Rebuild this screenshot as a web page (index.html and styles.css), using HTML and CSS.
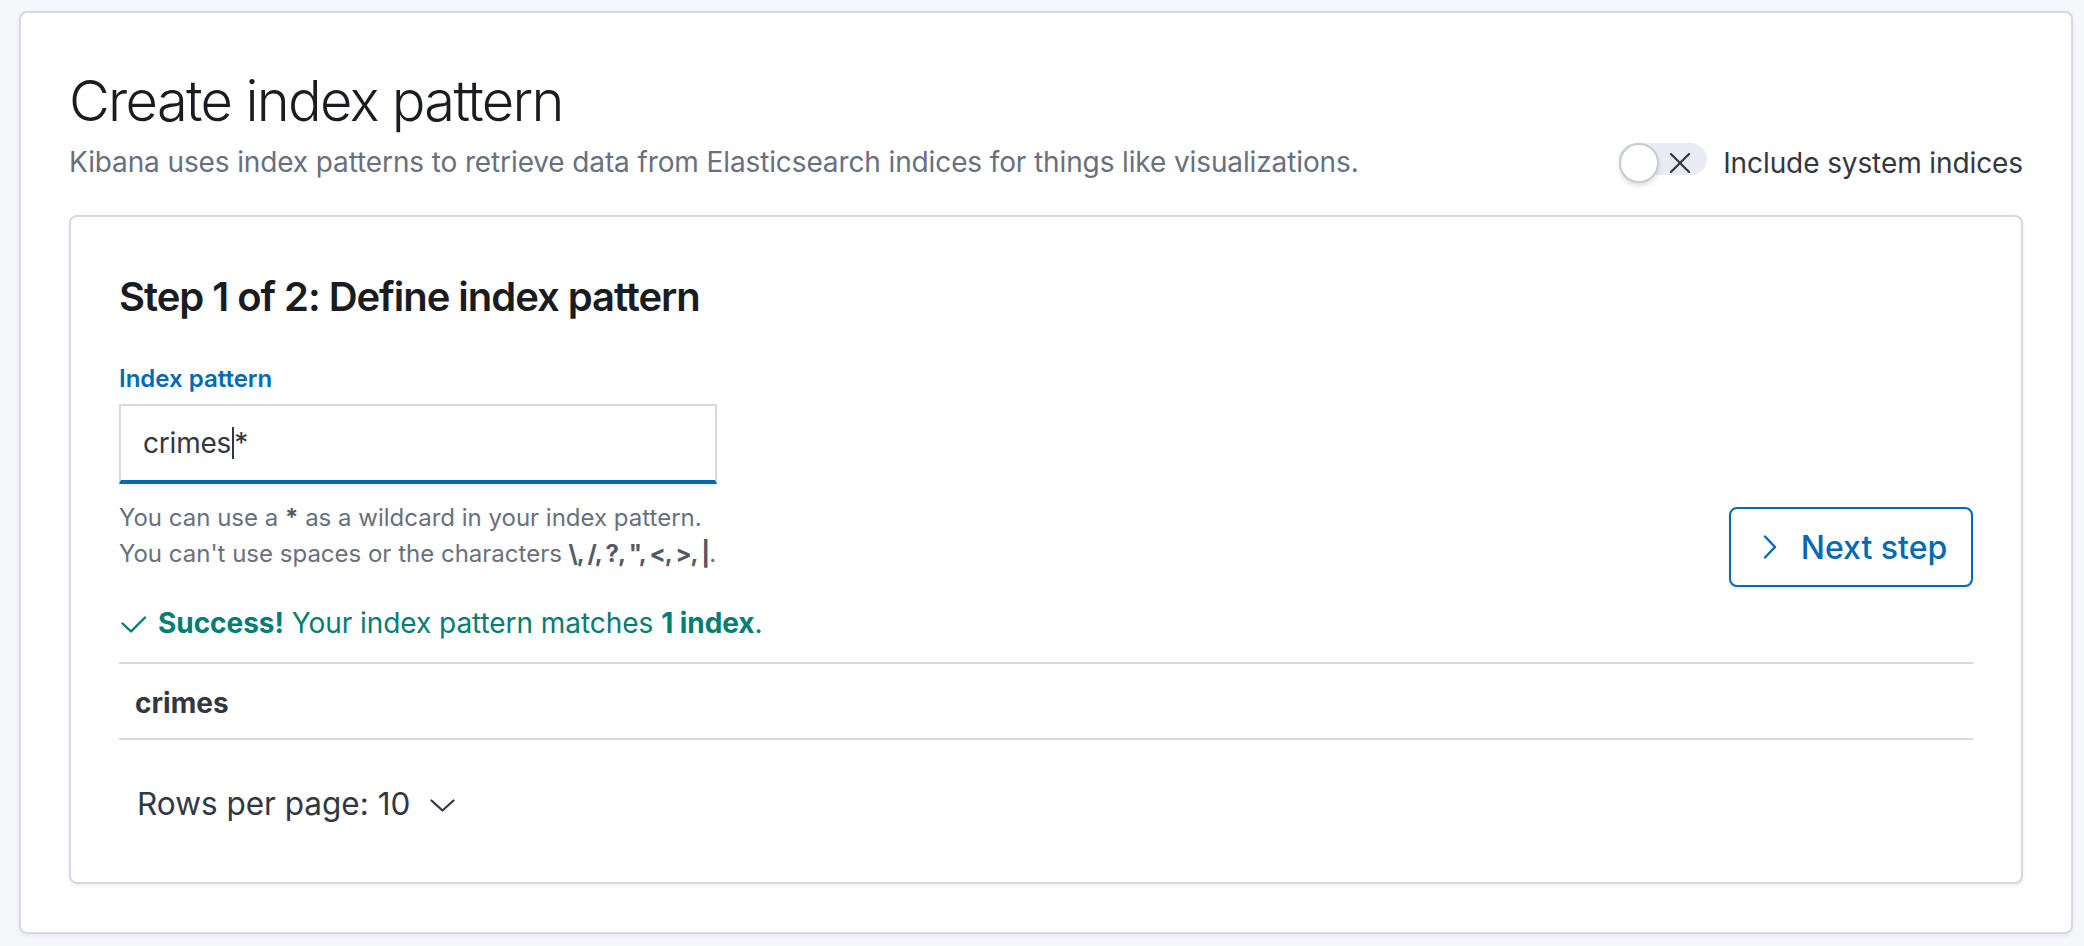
FILE: index.html
```html
<!DOCTYPE html>
<html lang="en">
<head>
<meta charset="utf-8">
<title>Create index pattern</title>
<link rel="stylesheet" href="styles.css">
</head>
<body>
<div class="page">
  <div class="panel">
    <div class="header">
      <div class="header-text">
        <h1 class="title">Create index pattern</h1>
        <p class="subtitle">Kibana uses index patterns to retrieve data from Elasticsearch indices for things like visualizations.</p>
      </div>
      <div class="switch">
        <div class="switch-track">
          <span class="switch-knob"></span>
          <svg class="switch-x" width="22" height="20" viewBox="0 0 22 20"><path d="M2 1 L20 19 M20 1 L2 19" stroke="#343741" stroke-width="2.2" fill="none" stroke-linecap="round"/></svg>
        </div>
        <span class="switch-label">Include system indices</span>
      </div>
    </div>

    <div class="step-panel">
      <h2 class="step-title">Step 1 of 2: Define index pattern</h2>
      <div class="form-row">
        <div class="form-field">
          <div class="label">Index pattern</div>
          <div class="input"><span>crimes</span><span class="caret"></span><span>*</span></div>
          <div class="help">
            <div>You can use a <b>*</b> as a wildcard in your index pattern.</div>
            <div>You can't use spaces or the characters <b class="chars">\, /, ?, ", &lt;, &gt;, |</b>.</div>
          </div>
        </div>
        <button class="next-btn">
          <svg width="14" height="24" viewBox="0 0 14 24"><path d="M2 1.5 L12 12 L2 22.5" stroke="#006bb4" stroke-width="2.4" fill="none" stroke-linecap="round" stroke-linejoin="round"/></svg>
          <span>Next step</span>
        </button>
      </div>

      <div class="success">
        <svg class="check" width="26" height="18" viewBox="0 0 26 18"><path d="M1.5 8.5 L10 16.5 L24 2.5" stroke="#017d73" stroke-width="2.4" fill="none" stroke-linecap="round" stroke-linejoin="round"/></svg>
        <span><b>Success!</b> Your index pattern matches <b>1 index</b>.</span>
      </div>

      <div class="table">
        <div class="table-row"><b>crimes</b></div>
      </div>

      <div class="pager">
        <span>Rows per page: 10</span>
        <svg width="25" height="13" viewBox="0 0 25 13"><path d="M1.5 1.5 L12.5 11.5 L23.5 1.5" stroke="#343741" stroke-width="2.2" fill="none" stroke-linecap="round" stroke-linejoin="round"/></svg>
      </div>
    </div>
  </div>
</div>
</body>
</html>
```

FILE: styles.css
```css
* { box-sizing: border-box; }
html, body { margin: 0; padding: 0; }
body {
  font-family: Inter, "Noto Sans", "Liberation Sans", sans-serif;
  color: #343741;
  background: #f5f7fa;
}
.page {
  width: 2084px;
  height: 946px;
  padding: 11px 11px 12px 19px;
}
.panel {
  height: 923px;
  background: #fff;
  border: 2px solid #d3dae6;
  border-radius: 8px;
  box-shadow: 0 2px 4px rgba(152, 162, 179, 0.15);
  padding: 48px;
}
.header {
  display: flex;
  justify-content: space-between;
  align-items: flex-end;
}
.title {
  margin: 0;
  font-size: 56px;
  line-height: 80px;
  font-weight: 300;
  letter-spacing: -0.03em;
  color: #1a1c21;
}
.subtitle {
  margin: 0;
  font-size: 28px;
  line-height: 42px;
  letter-spacing: -0.12px;
  color: #69707d;
}
.switch {
  display: flex;
  align-items: flex-start;
  gap: 16px;
  margin-bottom: 0;
}
.switch-track {
  position: relative;
  width: 88px;
  height: 40px;
}
.switch-track::before {
  content: "";
  position: absolute;
  left: 0;
  right: 0;
  top: 0;
  height: 32px;
  border-radius: 16px;
  background: #e9edf3;
}
.switch-knob {
  position: absolute;
  left: 0;
  top: 0;
  width: 40px;
  height: 40px;
  border-radius: 50%;
  background: #fff;
  border: 2px solid #c9ccd1;
  box-shadow: 0 3px 4px rgba(0, 0, 0, 0.12);
}
.switch-x {
  position: absolute;
  left: 50px;
  top: 10px;
}
.switch-label {
  font-size: 28px;
  line-height: 40px;
  letter-spacing: -0.1px;
  color: #343741;
}
.step-panel {
  margin-top: 32px;
  height: 669px;
  background: #fff;
  border: 2px solid #d3dae6;
  border-radius: 8px;
  box-shadow: 0 2px 4px rgba(152, 162, 179, 0.18);
  padding: 48px;
}
.step-title {
  margin: 0;
  font-size: 40px;
  line-height: 64px;
  font-weight: 600;
  letter-spacing: -0.026em;
  color: #1a1c21;
}
.form-row {
  display: flex;
  justify-content: space-between;
  align-items: flex-end;
  margin-top: 32px;
}
.label {
  font-size: 24px;
  line-height: 36px;
  font-weight: 600;
  color: #006bb4;
  margin-bottom: 7px;
}
.input {
  width: 598px;
  height: 80px;
  display: flex;
  align-items: center;
  padding: 0 22px;
  background: #fff;
  border: 2px solid #d6d9de;
  border-bottom: 4px solid #006bb4;
  box-shadow: 0 3px 4px -2px rgba(152, 162, 179, 0.3);
  font-size: 28px;
  letter-spacing: -0.2px;
  color: #343741;
}
.caret {
  display: inline-block;
  width: 2px;
  height: 32px;
  background: #343741;
  margin: 0 0 0 1px;
}
.help {
  margin-top: 16px;
  font-size: 24px;
  line-height: 36px;
  color: #69707d;
}
.help b { color: #535966; font-weight: 700; }
.help .chars { letter-spacing: -1.1px; }
.next-btn {
  width: 244px;
  height: 80px;
  margin-bottom: -15px;
  display: flex;
  align-items: center;
  justify-content: center;
  gap: 24px;
  padding: 0 0 0 8px;
  background: #fff;
  border: 2px solid #006bb4;
  border-radius: 8px;
  box-shadow: 0 2px 3px rgba(0, 0, 0, 0.08);
  font-family: inherit;
  font-size: 32px;
  font-weight: 500;
  color: #006bb4;
}
.success {
  display: flex;
  align-items: center;
  gap: 11px;
  margin-top: 30px;
  padding-left: 2px;
  font-size: 28px;
  line-height: 42px;
  letter-spacing: -0.05px;
  color: #017d73;
}
.success b { font-weight: 700; }
.check { margin-top: 2px; }
.table {
  margin-top: 18px;
  border-top: 2px solid #d3dae6;
  border-bottom: 2px solid #d3dae6;
}
.table-row {
  padding: 16px 16px 12px;
  font-size: 28px;
  line-height: 46px;
}
.table-row b { font-weight: 700; color: #343741; }
.pager {
  margin-top: 32px;
  height: 62px;
  display: flex;
  align-items: center;
  gap: 20px;
  padding-left: 18px;
  font-size: 31.5px;
  color: #343741;
}
.pager svg { margin-top: 4px; }
```
